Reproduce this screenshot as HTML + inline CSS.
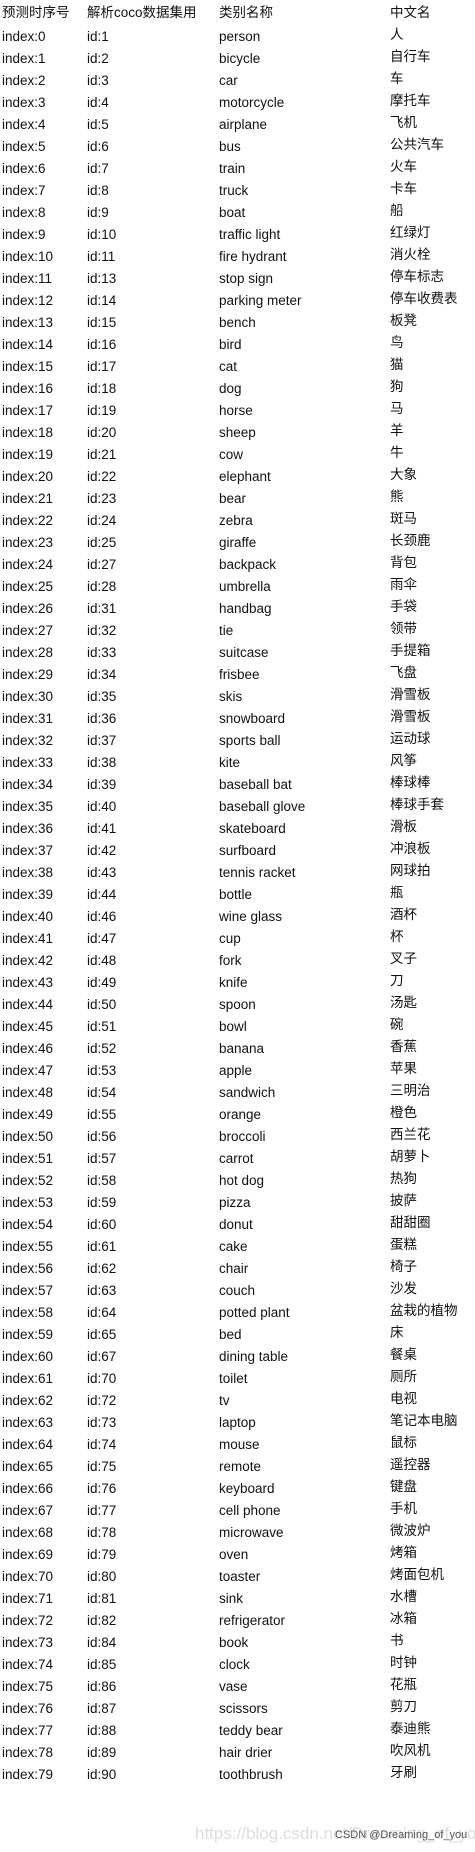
<!DOCTYPE html>
<html><head><meta charset="utf-8"><style>
body{margin:0;width:475px;height:1852px;background:#fff;position:relative;overflow:hidden;font-family:"Liberation Sans","Noto Sans CJK SC",sans-serif;font-size:13.5px;color:#111}
.r{position:absolute;left:0;height:22px;line-height:22px;white-space:nowrap}
.r span{position:absolute;top:0}
.a{left:2px}.b{left:87px}.c{left:219px}.d{left:390px}
.h .c,.h .d{}
.wm{position:absolute;left:195px;top:1824px;font-size:17px;color:#ddd;white-space:nowrap}
.wm2{position:absolute;left:335px;top:1829px;font-size:11px;color:#555;white-space:nowrap}
</style></head><body>
<div id="t"></div>
<script>
var names=["person","bicycle","car","motorcycle","airplane","bus","train","truck","boat","traffic light","fire hydrant","stop sign","parking meter","bench","bird","cat","dog","horse","sheep","cow","elephant","bear","zebra","giraffe","backpack","umbrella","handbag","tie","suitcase","frisbee","skis","snowboard","sports ball","kite","baseball bat","baseball glove","skateboard","surfboard","tennis racket","bottle","wine glass","cup","fork","knife","spoon","bowl","banana","apple","sandwich","orange","broccoli","carrot","hot dog","pizza","donut","cake","chair","couch","potted plant","bed","dining table","toilet","tv","laptop","mouse","remote","keyboard","cell phone","microwave","oven","toaster","sink","refrigerator","book","clock","vase","scissors","teddy bear","hair drier","toothbrush"];
var ids=[1,2,3,4,5,6,7,8,9,10,11,13,14,15,16,17,18,19,20,21,22,23,24,25,27,28,31,32,33,34,35,36,37,38,39,40,41,42,43,44,46,47,48,49,50,51,52,53,54,55,56,57,58,59,60,61,62,63,64,65,67,70,72,73,74,75,76,77,78,79,80,81,82,84,85,86,87,88,89,90];
var zh="人 自行车 车 摩托车 飞机 公共汽车 火车 卡车 船 红绿灯 消火栓 停车标志 停车收费表 板凳 鸟 猫 狗 马 羊 牛 大象 熊 斑马 长颈鹿 背包 雨伞 手袋 领带 手提箱 飞盘 滑雪板 滑雪板 运动球 风筝 棒球棒 棒球手套 滑板 冲浪板 网球拍 瓶 酒杯 杯 叉子 刀 汤匙 碗 香蕉 苹果 三明治 橙色 西兰花 胡萝卜 热狗 披萨 甜甜圈 蛋糕 椅子 沙发 盆栽的植物 床 餐桌 厕所 电视 笔记本电脑 鼠标 遥控器 键盘 手机 微波炉 烤箱 烤面包机 水槽 冰箱 书 时钟 花瓶 剪刀 泰迪熊 吹风机 牙刷".split(" ");
var h='<div class="r" style="top:2px"><span class="a">预测时序号</span><span class="b">解析coco数据集用</span><span class="c">类别名称</span><span class="d">中文名</span></div>';
for(var i=0;i<80;i++){h+='<div class="r" style="top:'+(26+i*22)+'px"><span class="a">index:'+i+'</span><span class="b">id:'+ids[i]+'</span><span class="c">'+names[i]+'</span><span class="d" style="top:-2px">'+zh[i]+'</span></div>';}
document.getElementById('t').innerHTML=h;
</script>
<div class="wm">https://blog.csdn.net/Dreaming_of_you</div>
<div class="wm2">CSDN @Dreaming_of_you</div>
</body></html>
